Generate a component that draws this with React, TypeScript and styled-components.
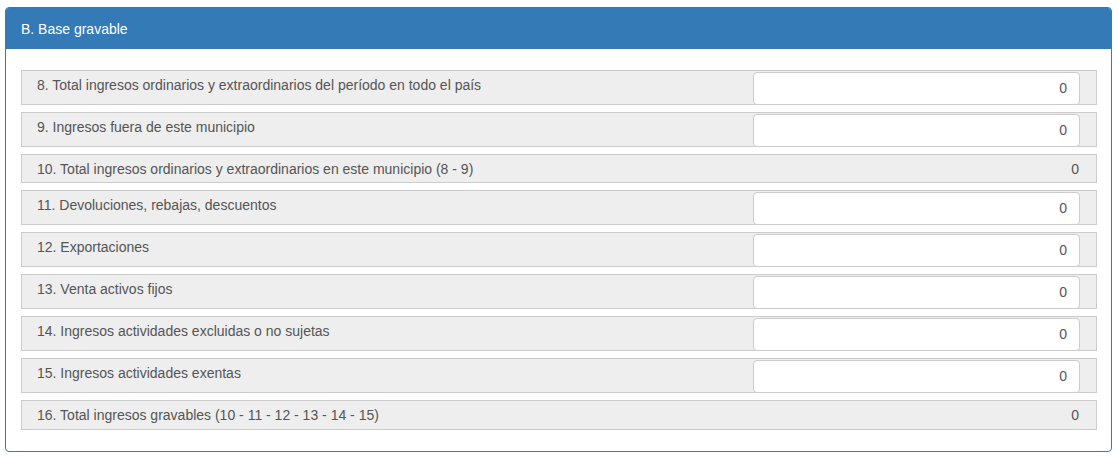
import styled, { createGlobalStyle } from "styled-components";

const GlobalStyle = createGlobalStyle`
  body {
    margin: 0;
    background: #fff;
    font-family: "Liberation Sans", Arial, sans-serif;
    font-size: 14px;
    color: #555;
  }
`;

const Page = styled.div`
  padding: 7px 6px 0 5px;
`;

const Panel = styled.div`
  border: 1px solid #337ab7;
  border-radius: 4px;
  background: #fff;
`;

const PanelHeading = styled.div`
  background: #337ab7;
  color: #fff;
  height: 41px;
  padding: 0 15px;
  display: flex;
  align-items: center;
  font-size: 14px;
  border-radius: 3px 3px 0 0;
`;

const PanelBody = styled.div`
  padding: 21px 14px 21px 15px;
  display: flex;
  flex-direction: column;
  gap: 7px;
`;

const Row = styled.div<{ $plain?: boolean; $height: number }>`
  display: flex;
  align-items: ${(p) => (p.$plain ? "center" : "flex-start")};
  justify-content: space-between;
  height: ${(p) => p.$height}px;
  box-sizing: border-box;
  background: #eee;
  border: 1px solid #ccc;
  padding: ${(p) => (p.$plain ? "0 16px 0 15px" : "1px 16px 0 15px")};
`;

const Label = styled.span<{ $plain?: boolean }>`
  line-height: 20px;
  padding-top: ${(p) => (p.$plain ? "0" : "3px")};
`;

const Input = styled.input`
  width: 327px;
  height: 33px;
  box-sizing: border-box;
  border: 1px solid #ccc;
  border-radius: 4px;
  background: #fff;
  text-align: right;
  padding: 0 12px 1px;
  font-family: "Liberation Sans", Arial, sans-serif;
  font-size: 14px;
  color: #555;
  outline: none;
`;

const Value = styled.span`
  line-height: 20px;
  padding-right: 1px;
`;

type Item = { label: string; plain?: boolean; height: number };

const items: Item[] = [
  { label: "8. Total ingresos ordinarios y extraordinarios del período en todo el país", height: 35 },
  { label: "9. Ingresos fuera de este municipio", height: 35 },
  { label: "10. Total ingresos ordinarios y extraordinarios en este municipio (8 - 9)", plain: true, height: 29 },
  { label: "11. Devoluciones, rebajas, descuentos", height: 35 },
  { label: "12. Exportaciones", height: 35 },
  { label: "13. Venta activos fijos", height: 35 },
  { label: "14. Ingresos actividades excluidas o no sujetas", height: 35 },
  { label: "15. Ingresos actividades exentas", height: 35 },
  { label: "16. Total ingresos gravables (10 - 11 - 12 - 13 - 14 - 15)", plain: true, height: 30 },
];

const App: React.FC = () => {
  return (
    <Page>
      <GlobalStyle />
      <Panel>
        <PanelHeading>B. Base gravable</PanelHeading>
        <PanelBody>
          {items.map((it) => (
            <Row key={it.label} $plain={it.plain} $height={it.height}>
              <Label $plain={it.plain}>{it.label}</Label>
              {it.plain ? <Value>0</Value> : <Input defaultValue="0" />}
            </Row>
          ))}
        </PanelBody>
      </Panel>
    </Page>
  );
};

export default App;
